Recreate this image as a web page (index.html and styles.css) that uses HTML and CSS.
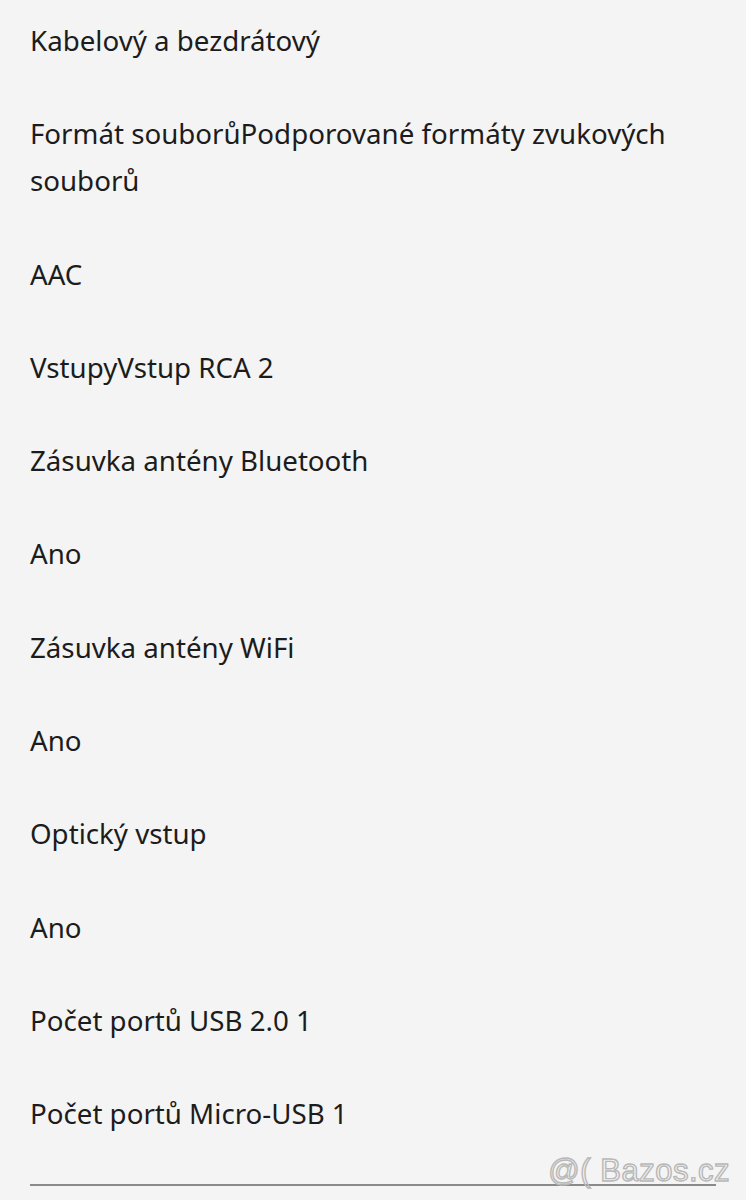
FILE: index.html
```html
<!DOCTYPE html>
<html lang="cs">
<head>
  <meta charset="UTF-8" />
  <meta name="viewport" content="width=device-width, initial-scale=1.0" />
  <title>Parametry</title>
  <link rel="stylesheet" href="styles.css">
</head>
<body>
  <div class="specs">
    <p>Kabelový a bezdrátový</p>
    <p>Formát souborůPodporované formáty zvukových souborů</p>
    <p>AAC</p>
    <p>VstupyVstup RCA 2</p>
    <p>Zásuvka antény Bluetooth</p>
    <p>Ano</p>
    <p>Zásuvka antény WiFi</p>
    <p>Ano</p>
    <p>Optický vstup</p>
    <p>Ano</p>
    <p>Počet portů USB 2.0 1</p>
    <p>Počet portů Micro-USB 1</p>
  </div>
  <hr class="divider" />
  <div class="watermark">@( Bazos.cz</div>
</body>
</html>
```

FILE: styles.css
```css
body {
  margin: 0;
  padding: 17px 0 0;
  background-color: #f4f4f4;
  color: #1c1c1c;
  font-family: 'Noto Sans', sans-serif;
  height: 1183px;
  overflow: hidden;
  position: relative;
}

.specs {
  padding: 0 30px;
}

.specs p {
  margin: 0 0 46.3px;
  font-size: 27.7px;
  line-height: 47px;
}

.divider {
  margin: 2px 30px 0;
  border: none;
  border-top: 2px solid #8a8a8a;
}

.watermark {
  position: absolute;
  right: 16px;
  bottom: 14px;
  font-family: 'Liberation Sans', sans-serif;
  font-size: 31px;
  line-height: 1;
  color: transparent;
  -webkit-text-stroke: 1.4px #b8b8b8;
  letter-spacing: 0.5px;
}
```
